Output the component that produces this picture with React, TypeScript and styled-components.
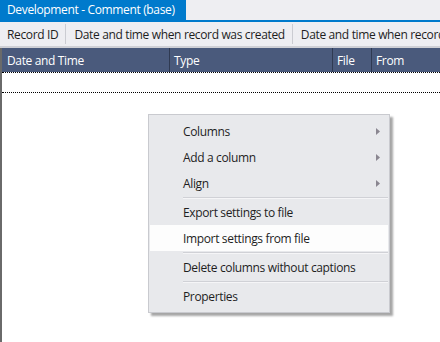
import React from "react";
import styled, { createGlobalStyle } from "styled-components";

const Global = createGlobalStyle`
  html, body { margin: 0; padding: 0; }
  body { width: 440px; height: 342px; overflow: hidden; background: #eeeef2; font-family: "Open Sans", "Noto Sans", sans-serif; font-size: 12px; letter-spacing: -0.35px; }
`;

const Page = styled.div`
  width: 440px;
  height: 342px;
  display: flex;
  flex-direction: column;
  position: relative;
  background: #eeeef2;
`;

const TabStrip = styled.div`
  height: 20px;
  display: flex;
  border-bottom: 2px solid #007acc;
`;

const Tab = styled.div`
  background: #007acc;
  color: #fff;
  padding: 0 0 0 7px;
  width: 179px;
  line-height: 19px;
  font-size: 12px;
`;

const Toolbar = styled.div`
  height: 24px;
  display: flex;
  align-items: center;
  border-bottom: 2px solid #cfd0d6;
  white-space: nowrap;
  overflow: hidden;
`;

const ToolItem = styled.div`
  padding: 0 7px 0 7px;
  color: #1e1e1e;
  display: flex;
  align-items: center;
  height: 20px;
  flex-shrink: 0;
  & + & { border-left: 1px solid #cbccd2; padding-left: 8px; }
`;

const Grid = styled.div`
  flex: 1;
  background: #fff;
  border-left: 2px solid #6a6a6a;
  display: flex;
  flex-direction: column;
`;

const Header = styled.div`
  height: 24px;
  background: #4a5a7c;
  display: flex;
  align-items: stretch;
`;

const HeadCell = styled.div<{ $w?: number }>`
  ${(p) => (p.$w ? `width: ${p.$w}px;` : "flex: 1;")}
  color: #fff;
  padding-left: 5px;
  display: flex;
  align-items: center;
  box-sizing: border-box;
  white-space: nowrap;
  & + & { border-left: 1px solid #2f3a52; padding-left: 4px; }
`;

const Row = styled.div`
  height: 19px;
  border-top: 1px dotted #000;
  border-bottom: 1px dotted #000;
`;

const Menu = styled.div`
  position: absolute;
  left: 148px;
  top: 114px;
  width: 242px;
  background: #e8e9ec;
  border: 1px solid #c9cacf;
  box-shadow: 3px 3px 2px rgba(0, 0, 0, 0.35);
  padding: 3px 1px;
  box-sizing: border-box;
`;

const Item = styled.div<{ $hl?: boolean }>`
  height: 26px;
  display: flex;
  align-items: center;
  padding-left: 33px;
  padding-right: 8px;
  color: #1e1e1e;
  background: ${(p) => (p.$hl ? "#fdfdfd" : "transparent")};
  justify-content: space-between;
`;

const Sep = styled.div`
  height: 1px;
  margin: 1px 0 0 33px;
  background: #d0d1d6;
  border-bottom: 1px solid #f5f5f7;
`;

const Arrow = () => (
  <svg width="4" height="7" viewBox="0 0 4 7">
    <path d="M0 0 L4 3.5 L0 7 Z" fill="#8a8690" />
  </svg>
);

export default function App() {
  return (
    <>
      <Global />
      <Page>
        <TabStrip>
          <Tab>Development - Comment (base)</Tab>
        </TabStrip>
        <Toolbar>
          <ToolItem>Record ID</ToolItem>
          <ToolItem>Date and time when record was created</ToolItem>
          <ToolItem>Date and time when record was modified</ToolItem>
        </Toolbar>
        <Grid>
          <Header>
            <HeadCell $w={167}>Date and Time</HeadCell>
            <HeadCell $w={163}>Type</HeadCell>
            <HeadCell $w={39}>File</HeadCell>
            <HeadCell>From</HeadCell>
          </Header>
          <Row />
        </Grid>
        <Menu>
          <Item>Columns<Arrow /></Item>
          <Item>Add a column<Arrow /></Item>
          <Item>Align<Arrow /></Item>
          <Sep />
          <Item>Export settings to file</Item>
          <Item $hl>Import settings from file</Item>
          <Sep />
          <Item>Delete columns without captions</Item>
          <Sep />
          <Item>Properties</Item>
        </Menu>
      </Page>
    </>
  );
}
